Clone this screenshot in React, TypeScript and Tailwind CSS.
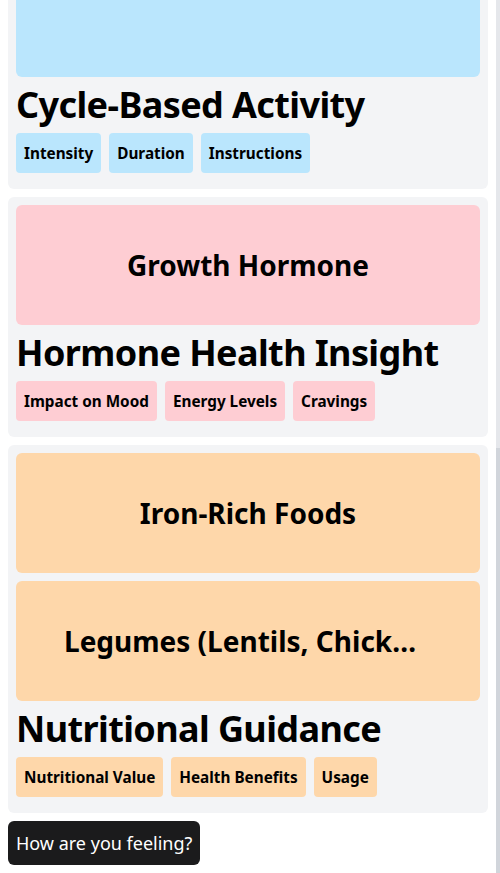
import React from 'react';

type Section = {
    title: string;
    boxes: string[];
    tags: string[];
    tone: string;
};

const sections: Section[] = [
    { title: 'Cycle-Based Activity', boxes: [''], tags: ['Intensity', 'Duration', 'Instructions'], tone: 'bg-[#bae6fd]' },
    { title: 'Hormone Health Insight', boxes: ['Growth Hormone'], tags: ['Impact on Mood', 'Energy Levels', 'Cravings'], tone: 'bg-[#fecdd3]' },
    {
        title: 'Nutritional Guidance',
        boxes: ['Iron-Rich Foods', 'Legumes (Lentils, Chickpeas, Beans)'],
        tags: ['Nutritional Value', 'Health Benefits', 'Usage'],
        tone: 'bg-[#fed7aa]',
    },
];

const Card = ({ section }: { section: Section }) => {
    return (
        <div className="bg-[#f3f4f6] rounded-md p-2 pb-4 flex flex-col gap-2 min-w-0">
            {section.boxes.map((b, i) => (
                <div key={i} className={`${section.tone} rounded-md h-[120px] px-12 flex items-center min-w-0`}>
                    <p className="w-full text-[28px] font-bold leading-9 truncate text-center">{b}</p>
                </div>
            ))}
            <h2 className="text-[36px] leading-10 font-bold text-black tracking-[-0.6px]">{section.title}</h2>
            <div className="flex gap-2">
                {section.tags.map((t) => (
                    <span key={t} className={`${section.tone} rounded h-10 px-2 flex items-center text-[15.3px] font-bold`}>
                        {t}
                    </span>
                ))}
            </div>
        </div>
    );
};

const App = () => {
    return (
        <div className="flex w-[500px] h-[873px] overflow-hidden bg-white text-black" style={{ fontFamily: '"Noto Sans", sans-serif' }}>
            <div className="flex-1 min-w-0 pl-2 pr-2 -mt-[51px] flex flex-col gap-2">
                {sections.map((s) => (
                    <Card key={s.title} section={s} />
                ))}
                <div>
                    <button className="bg-[#1b1b1c] text-white rounded-md px-2 h-11 text-[18px]">How are you feeling?</button>
                </div>
            </div>
            <div className="w-1 flex flex-col bg-[#e5e7eb]">
                <div className="h-[448px]" />
                <div className="flex-1 bg-[#d1d5db]" />
            </div>
        </div>
    );
};

export default App;
